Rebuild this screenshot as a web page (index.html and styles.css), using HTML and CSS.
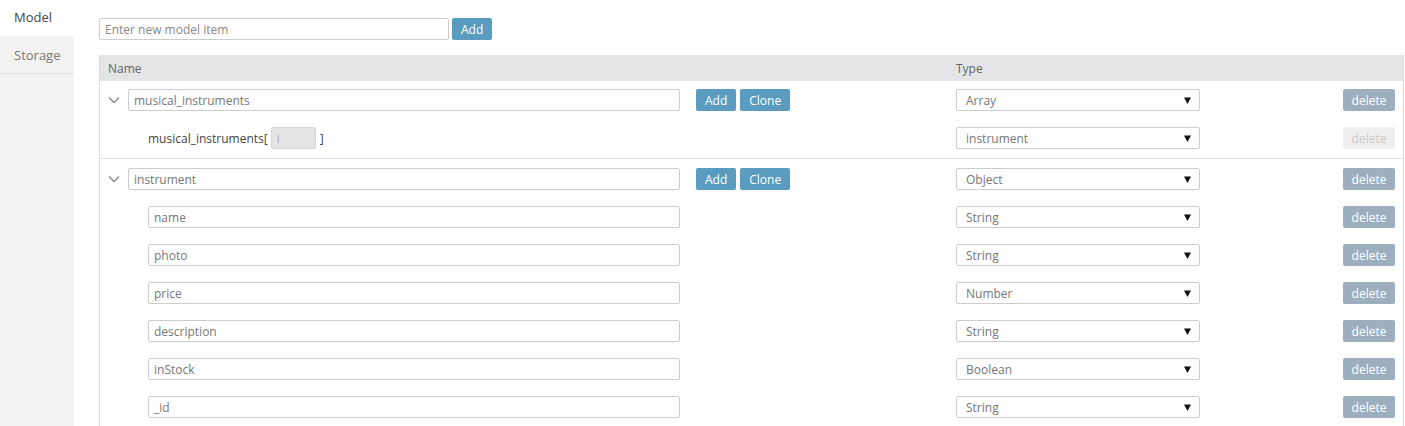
FILE: index.html
```html
<!DOCTYPE html>
<html>
<head>
<meta charset="utf-8">
<link rel="stylesheet" href="styles.css">
</head>
<body>
<div class="app">
  <nav class="sidebar">
    <div class="tab active">Model</div>
    <div class="tab">Storage</div>
  </nav>
  <main class="main">
    <div class="new-item">
      <input class="field new-field" placeholder="Enter new model item">
      <button class="btn">Add</button>
    </div>
    <div class="table">
      <div class="head">
        <div class="head-name">Name</div>
        <div class="head-type">Type</div>
      </div>

      <div class="group">
        <div class="row">
          <div class="name-cell">
            <span class="chev"><svg width="12" height="8" viewBox="0 0 12 8"><path d="M1 1.5 L6 6.5 L11 1.5" fill="none" stroke="#888" stroke-width="1.3"/></svg></span>
            <input class="field name-field" value="musical_instruments">
            <button class="btn">Add</button>
            <button class="btn">Clone</button>
          </div>
          <div class="select"><span>Array</span><svg class="caret" width="7" height="7" viewBox="0 0 7 7"><path d="M0 0.5 H7 L3.5 7 Z" fill="#111"/></svg></div>
          <div class="del-cell"><button class="del">delete</button></div>
        </div>
        <div class="row">
          <div class="name-cell child">
            <span class="arr-label">musical_instruments[</span>
            <input class="index-field" placeholder="i">
            <span class="arr-close">]</span>
          </div>
          <div class="select"><span>instrument</span><svg class="caret" width="7" height="7" viewBox="0 0 7 7"><path d="M0 0.5 H7 L3.5 7 Z" fill="#111"/></svg></div>
          <div class="del-cell"><button class="del disabled">delete</button></div>
        </div>
      </div>

      <div class="group">
        <div class="row">
          <div class="name-cell">
            <span class="chev"><svg width="12" height="8" viewBox="0 0 12 8"><path d="M1 1.5 L6 6.5 L11 1.5" fill="none" stroke="#888" stroke-width="1.3"/></svg></span>
            <input class="field name-field" value="instrument">
            <button class="btn">Add</button>
            <button class="btn">Clone</button>
          </div>
          <div class="select"><span>Object</span><svg class="caret" width="7" height="7" viewBox="0 0 7 7"><path d="M0 0.5 H7 L3.5 7 Z" fill="#111"/></svg></div>
          <div class="del-cell"><button class="del">delete</button></div>
        </div>
        <div class="row">
          <div class="name-cell child"><input class="field child-field" value="name"></div>
          <div class="select"><span>String</span><svg class="caret" width="7" height="7" viewBox="0 0 7 7"><path d="M0 0.5 H7 L3.5 7 Z" fill="#111"/></svg></div>
          <div class="del-cell"><button class="del">delete</button></div>
        </div>
        <div class="row">
          <div class="name-cell child"><input class="field child-field" value="photo"></div>
          <div class="select"><span>String</span><svg class="caret" width="7" height="7" viewBox="0 0 7 7"><path d="M0 0.5 H7 L3.5 7 Z" fill="#111"/></svg></div>
          <div class="del-cell"><button class="del">delete</button></div>
        </div>
        <div class="row">
          <div class="name-cell child"><input class="field child-field" value="price"></div>
          <div class="select"><span>Number</span><svg class="caret" width="7" height="7" viewBox="0 0 7 7"><path d="M0 0.5 H7 L3.5 7 Z" fill="#111"/></svg></div>
          <div class="del-cell"><button class="del">delete</button></div>
        </div>
        <div class="row">
          <div class="name-cell child"><input class="field child-field" value="description"></div>
          <div class="select"><span>String</span><svg class="caret" width="7" height="7" viewBox="0 0 7 7"><path d="M0 0.5 H7 L3.5 7 Z" fill="#111"/></svg></div>
          <div class="del-cell"><button class="del">delete</button></div>
        </div>
        <div class="row">
          <div class="name-cell child"><input class="field child-field" value="inStock"></div>
          <div class="select"><span>Boolean</span><svg class="caret" width="7" height="7" viewBox="0 0 7 7"><path d="M0 0.5 H7 L3.5 7 Z" fill="#111"/></svg></div>
          <div class="del-cell"><button class="del">delete</button></div>
        </div>
        <div class="row">
          <div class="name-cell child"><input class="field child-field" value="_id"></div>
          <div class="select"><span>String</span><svg class="caret" width="7" height="7" viewBox="0 0 7 7"><path d="M0 0.5 H7 L3.5 7 Z" fill="#111"/></svg></div>
          <div class="del-cell"><button class="del">delete</button></div>
        </div>
      </div>
    </div>
  </main>
</div>
</body>
</html>
```
FILE: styles.css
```css
html, body {
  margin: 0;
  padding: 0;
  background: #fff;
  font-family: "Open Sans", "Noto Sans", sans-serif;
  font-size: 12px;
  color: #555;
  height: 100%;
  overflow: hidden;
}
.app {
  display: flex;
  height: 100vh;
}
.sidebar {
  width: 74px;
  flex: none;
  background: #f2f2f2;
}
.tab {
  height: 37px;
  line-height: 38px;
  padding-left: 14px;
  font-size: 13px;
  color: #777;
  border-bottom: 1px solid #e2e2e2;
}
.tab.active {
  background: #fff;
  color: #444;
  border-bottom: none;
  height: 36px;
  line-height: 35px;
}
.main {
  flex: 1;
  padding-left: 25px;
  padding-right: 1px;
  padding-top: 18px;
  display: flex;
  flex-direction: column;
}
.new-item {
  display: flex;
  gap: 3px;
  height: 22px;
  margin-bottom: 15px;
}
.field {
  box-sizing: border-box;
  height: 22px;
  border: 1px solid #ccc;
  border-radius: 2px;
  font-family: inherit;
  font-size: 12px;
  color: #777;
  padding: 0 5px;
  outline: none;
  background: #fff;
}
.field::placeholder { color: #888; }
.new-field { width: 350px; }
.btn {
  box-sizing: border-box;
  height: 22px;
  padding: 0 9px;
  border: none;
  border-radius: 2px;
  background: #5a9cc0;
  color: #fff;
  font-family: inherit;
  font-size: 12px;
  font-weight: 400;
  cursor: pointer;
}
.table {
  flex: 1;
  border-left: 1px solid #dcdcdc;
  border-right: 1px solid #dcdcdc;
}
.head {
  display: grid;
  grid-template-columns: 856px 1fr;
  height: 26px;
  line-height: 27px;
  background: #e3e5e7;
  color: #666;
  font-size: 12px;
}
.head-name { padding-left: 8px; }
.group {
  border-bottom: 1px solid #e2e2e2;
  padding-bottom: 1px;
}
.group:last-child { border-bottom: none; }
.row {
  display: grid;
  grid-template-columns: 856px 244px 1fr;
  align-items: center;
  height: 38px;
}
.group + .group .row:first-child { margin-top: 1px; }
.name-cell {
  display: flex;
  align-items: center;
  padding-left: 8px;
}
.name-cell.child { padding-left: 48px; }
.chev {
  width: 12px;
  margin-right: 8px;
  display: flex;
  align-items: center;
}
.name-field { width: 552px; margin-right: 16px; }
.name-cell .btn + .btn { margin-left: 4px; }
.child-field { width: 532px; }
.arr-label { color: #444; }
.index-field {
  box-sizing: border-box;
  width: 45px;
  height: 22px;
  margin-left: 3px;
  margin-right: 4px;
  border: 1px solid #d6d6d6;
  border-radius: 2px;
  background: #e4e4e4;
  font-family: inherit;
  font-size: 12px;
  padding: 0 5px;
  outline: none;
}
.index-field::placeholder { color: #aaa; }
.arr-close { color: #444; }
.select {
  box-sizing: border-box;
  height: 22px;
  border: 1px solid #ccc;
  border-radius: 2px;
  display: flex;
  align-items: center;
  justify-content: space-between;
  padding: 0 8px 0 9px;
  color: #777;
  background: #fff;
}
.caret { margin-top: 1px; }
.del-cell {
  display: flex;
  justify-content: flex-end;
  padding-right: 8px;
}
.del {
  box-sizing: border-box;
  width: 52px;
  height: 22px;
  border: none;
  border-radius: 2px;
  background: #9dafbe;
  color: #fff;
  font-family: inherit;
  font-size: 12px;
  padding: 0;
}
.del.disabled {
  background: #efefef;
  color: #c8c8c8;
}
```
